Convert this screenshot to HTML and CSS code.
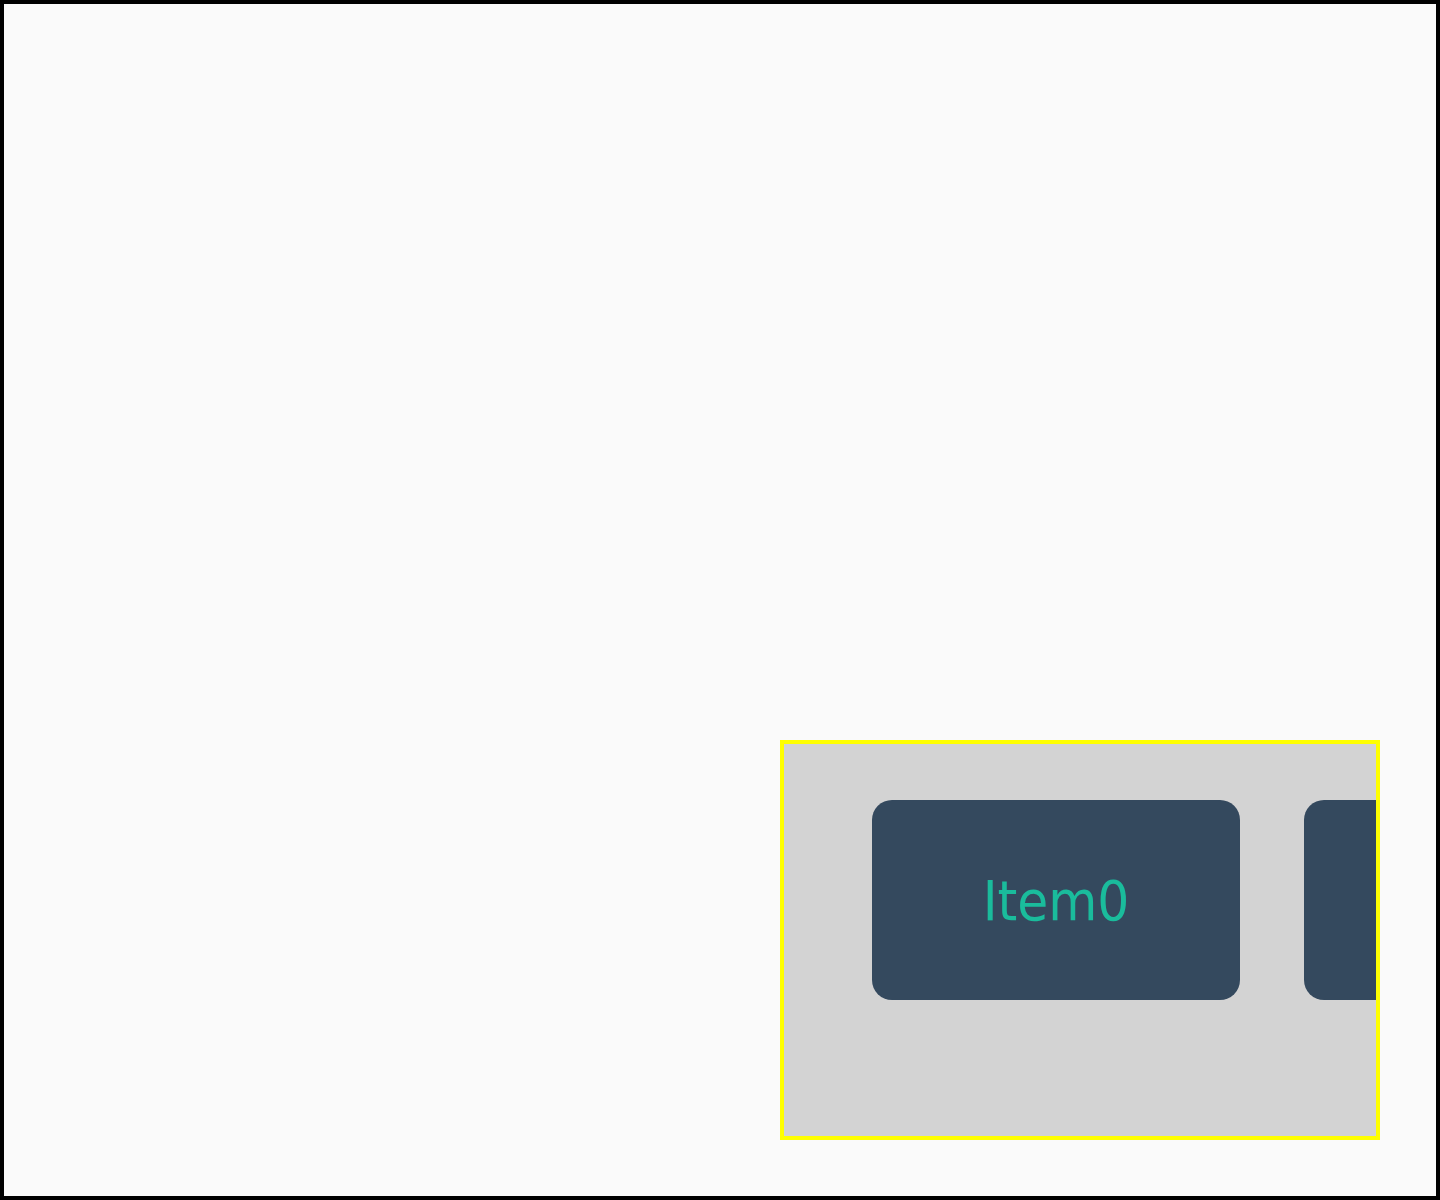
FILE: index.html
```html
<!DOCTYPE html>
<html>
<head>
<meta charset="utf-8">
<link rel="stylesheet" href="styles.css">
</head>
<body>
<div class="frame">
  <div class="strip">
    <div class="item">Item0</div>
    <div class="item">Item1</div>
    <div class="item">Item2</div>
  </div>
</div>
</body>
</html>
```
FILE: styles.css
```css
html, body {
  margin: 0;
  padding: 0;
}
body {
  width: 1440px;
  height: 1200px;
  box-sizing: border-box;
  border: 4px solid #000;
  background: #fafafa;
  font-family: "DejaVu Sans Condensed", "DejaVu Sans", sans-serif;
}
.frame {
  display: flex;
  justify-content: flex-end;
  padding: 736px 56px 0 0;
}
.strip {
  width: 600px;
  height: 400px;
  box-sizing: border-box;
  border: 4px solid #ffff00;
  background: #d3d3d3;
  display: flex;
  gap: 64px;
  padding: 56px 0 0 88px;
  overflow: hidden;
}
.item {
  flex: 0 0 368px;
  height: 200px;
  border-radius: 20px;
  background: #34495e;
  color: #1abc9c;
  font-size: 56px;
  display: flex;
  align-items: center;
  justify-content: center;
}
```
